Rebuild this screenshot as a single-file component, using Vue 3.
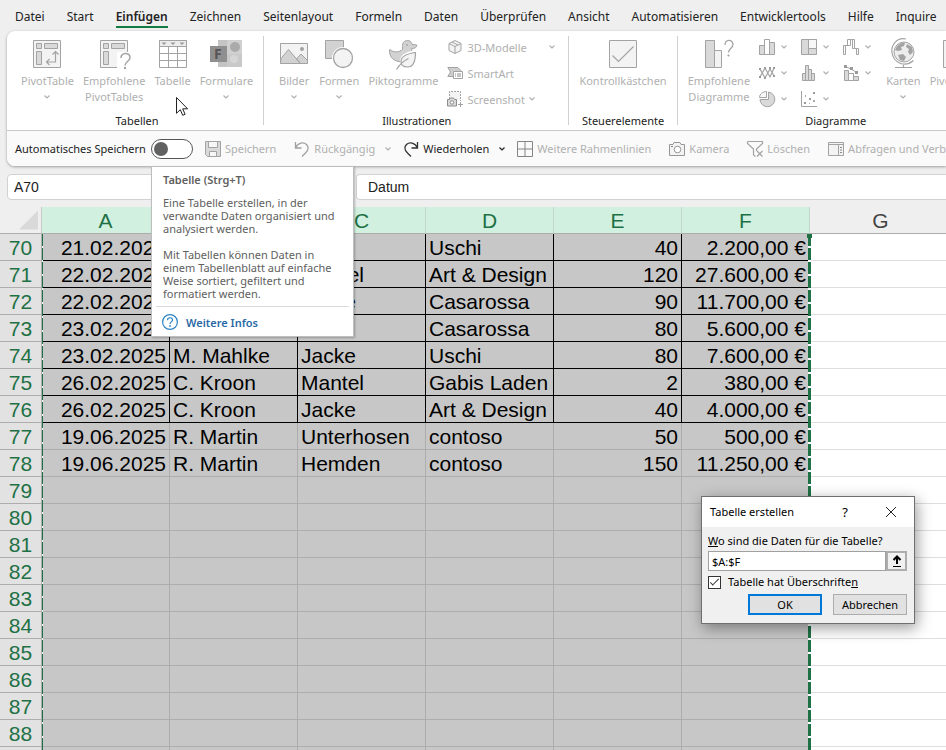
<template>
  <div class="excel">
    <nav class="tabs">
      <button
        v-for="tab in tabs"
        :key="tab"
        type="button"
        :class="['tab', { 'tab--active': tab === activeTab }]"
        @click="activeTab = tab"
      >
        {{ tab }}
      </button>
    </nav>

    <header class="ribbon">
      <div class="groups">
        <section class="group">
          <div class="group-body">
            <button v-for="b in tableButtons" :key="b.lines[0]" type="button" class="big-button">
              <svg class="icon-big" viewBox="-2 0 32 28" v-html="icons[b.icon]"></svg>
              <span v-for="line in b.lines" :key="line">{{ line }}</span>
              <svg v-if="b.menu" class="chevron" viewBox="0 0 6 4" v-html="icons.chevron"></svg>
            </button>
          </div>
          <div class="group-title">Tabellen</div>
        </section>

        <section class="group group--images">
          <div class="group-body">
            <button v-for="b in imageButtons" :key="b.lines[0]" type="button" class="big-button">
              <svg class="icon-big" viewBox="-2 0 32 28" v-html="icons[b.icon]"></svg>
              <span v-for="line in b.lines" :key="line">{{ line }}</span>
              <svg v-if="b.menu" class="chevron" viewBox="0 0 6 4" v-html="icons.chevron"></svg>
            </button>
            <div class="small-list">
              <button type="button" class="small-button">
                <svg class="icon" viewBox="0 0 16 16" v-html="icons.cube"></svg>
                <span class="grow">3D-Modelle</span>
                <svg class="chevron" viewBox="0 0 6 4" v-html="icons.chevron"></svg>
              </button>
              <button type="button" class="small-button">
                <svg class="icon" viewBox="0 0 16 16" v-html="icons.smartart"></svg>
                <span>SmartArt</span>
              </button>
              <button type="button" class="small-button">
                <svg class="icon" viewBox="0 0 16 16" v-html="icons.screenshot"></svg>
                <span>Screenshot</span>
                <svg class="chevron" viewBox="0 0 6 4" v-html="icons.chevron"></svg>
              </button>
            </div>
          </div>
          <div class="group-title">Illustrationen</div>
        </section>

        <section class="group">
          <div class="group-body">
            <button type="button" class="big-button">
              <svg class="icon-big" viewBox="-2 0 32 28" v-html="icons.checkbox"></svg>
              <span>Kontrollkästchen</span>
            </button>
          </div>
          <div class="group-title">Steuerelemente</div>
        </section>

        <section class="group">
          <div class="group-body">
            <button type="button" class="big-button">
              <svg class="icon-big" viewBox="-2 0 32 28" v-html="icons.recommended"></svg>
              <span>Empfohlene</span>
              <span>Diagramme</span>
            </button>
            <div class="chart-grid">
              <button v-for="c in charts" :key="c.icon" type="button" class="chart-button" :aria-label="c.label">
                <svg class="icon" viewBox="0 0 16 16" v-html="icons[c.icon]"></svg>
                <svg class="chevron" viewBox="0 0 6 4" v-html="icons.chevron"></svg>
              </button>
            </div>
            <button type="button" class="big-button">
              <svg class="icon-big" viewBox="-2 0 32 28" v-html="icons.globe"></svg>
              <span>Karten</span>
              <svg class="chevron" viewBox="0 0 6 4" v-html="icons.chevron"></svg>
            </button>
            <button type="button" class="big-button">
              <svg class="icon-big" viewBox="-2 0 32 28" v-html="icons.pivot"></svg>
              <span>PivotChart</span>
              <svg class="chevron" viewBox="0 0 6 4" v-html="icons.chevron"></svg>
            </button>
          </div>
          <div class="group-title">Diagramme</div>
        </section>
      </div>

      <div class="quick">
        <label class="autosave">
          Automatisches Speichern
          <input v-model="autosave" type="checkbox" role="switch" class="switch" />
        </label>
        <button
          v-for="q in quickButtons"
          :key="q.label"
          type="button"
          :class="['quick-button', { 'quick-button--on': q.enabled, 'quick-button--menu': q.menu }]"
        >
          <svg class="icon" viewBox="0 0 16 16" v-html="icons[q.icon]"></svg>
          <span>{{ q.label }}</span>
          <svg v-if="q.menu" class="chevron" viewBox="0 0 6 4" v-html="icons.chevron"></svg>
        </button>
      </div>
    </header>

    <div class="formula-bar">
      <input v-model="cellName" class="name-box" type="text" aria-label="Namenfeld" />
      <input v-model="formula" class="formula-box" type="text" aria-label="Bearbeitungsleiste" />
    </div>

    <main class="sheet">
      <table class="grid">
        <colgroup>
          <col class="col-head" />
          <col v-for="n in 6" :key="n" class="col-data" />
          <col />
        </colgroup>
        <thead>
          <tr>
            <th class="corner"><span class="corner-mark"></span></th>
            <th v-for="c in columns" :key="c" scope="col" :class="{ selected: c !== 'G' }">{{ c }}</th>
          </tr>
        </thead>
        <tbody>
          <tr v-for="row in rows" :key="row.nr" :class="{ framed: row.nr <= 76 }">
            <th scope="row">{{ row.nr }}</th>
            <td v-for="(cell, i) in row.cells" :key="i" :class="{ number: i === 0 || i > 3 }">{{ cell }}</td>
            <td class="outside"></td>
          </tr>
        </tbody>
      </table>
      <div class="ants"></div>
    </main>

    <!-- Tooltip zu "Tabelle" -->
    <aside class="tooltip">
      <strong>Tabelle (Strg+T)</strong>
      <p>Eine Tabelle erstellen, in der<br />verwandte Daten organisiert und<br />analysiert werden.</p>
      <p>Mit Tabellen können Daten in<br />einem Tabellenblatt auf einfache<br />Weise sortiert, gefiltert und<br />formatiert werden.</p>
      <a href="#" class="more">
        <svg class="icon" viewBox="0 0 16 16" v-html="icons.help"></svg>
        Weitere Infos
      </a>
    </aside>

    <svg class="pointer" viewBox="0 0 12 19">
      <path d="M.5.5v15.8l3.8-3.6 2.4 5.6 2.4-1-2.4-5.5h4.9z" fill="#fff" stroke="#222" />
    </svg>

    <form class="dialog" role="dialog" aria-label="Tabelle erstellen" @submit.prevent>
      <div class="dialog-bar">
        <span class="grow">Tabelle erstellen</span>
        <button type="button" class="bar-button help">?</button>
        <button type="button" class="bar-button" aria-label="Schließen">
          <svg class="close" viewBox="0 0 10 10"><path d="M0 0l10 10M10 0L0 10" stroke="#222" /></svg>
        </button>
      </div>
      <div class="dialog-body">
        <label for="range"><u>W</u>o sind die Daten für die Tabelle?</label>
        <div class="range">
          <input id="range" v-model="range" type="text" />
          <button type="button" aria-label="Bereich auswählen">
            <svg viewBox="0 0 10 12" class="range-arrow">
              <path d="M5 9V2M1.500 5L5 1.500 8.500 5" fill="none" stroke="#000" stroke-width="2" />
              <path d="M1 11.500h8" stroke="#000" />
            </svg>
          </button>
        </div>
        <label class="check">
          <input v-model="hasHeaders" type="checkbox" />
          <span>Tabelle hat Überschrifte<u>n</u></span>
        </label>
        <div class="actions">
          <button type="submit" class="primary">OK</button>
          <button type="button">Abbrechen</button>
        </div>
      </div>
    </form>
  </div>
</template>

<script setup>
import { ref } from 'vue'

const activeTab = ref('Einfügen')
const autosave = ref(false)
const cellName = ref('A70')
const formula = ref('Datum')
const range = ref('$A:$F')
const hasHeaders = ref(true)

const tabs = [
  'Datei', 'Start', 'Einfügen', 'Zeichnen', 'Seitenlayout', 'Formeln', 'Daten',
  'Überprüfen', 'Ansicht', 'Automatisieren', 'Entwicklertools', 'Hilfe', 'Inquire',
]

const tableButtons = [
  { icon: 'pivot', lines: ['PivotTable'], menu: true },
  { icon: 'pivotHelp', lines: ['Empfohlene', 'PivotTables'] },
  { icon: 'table', lines: ['Tabelle'] },
  { icon: 'forms', lines: ['Formulare'], menu: true },
]

const imageButtons = [
  { icon: 'picture', lines: ['Bilder'], menu: true },
  { icon: 'shapes', lines: ['Formen'], menu: true },
  { icon: 'duck', lines: ['Piktogramme'] },
]

const charts = [
  { icon: 'column', label: 'Säulendiagramm' },
  { icon: 'treemap', label: 'Hierarchiediagramm' },
  { icon: 'waterfall', label: 'Wasserfalldiagramm' },
  { icon: 'line', label: 'Liniendiagramm' },
  { icon: 'histogram', label: 'Statistikdiagramm' },
  { icon: 'combo', label: 'Kombidiagramm' },
  { icon: 'pie', label: 'Kreisdiagramm' },
  { icon: 'scatter', label: 'Punktdiagramm' },
]

const quickButtons = [
  { icon: 'save', label: 'Speichern' },
  { icon: 'undo', label: 'Rückgängig', menu: true },
  { icon: 'redo', label: 'Wiederholen', menu: true, enabled: true },
  { icon: 'borders', label: 'Weitere Rahmenlinien' },
  { icon: 'camera', label: 'Kamera' },
  { icon: 'filter', label: 'Löschen' },
  { icon: 'queries', label: 'Abfragen und Verbindungen' },
]

const columns = ['A', 'B', 'C', 'D', 'E', 'F', 'G']

const data = [
  ['21.02.2025', 'M. Mahlke', 'Hose', 'Uschi', '40', '2.200,00 €'],
  ['22.02.2025', 'C. Kroon', 'Mantel', 'Art & Design', '120', '27.600,00 €'],
  ['22.02.2025', 'C. Kroon', 'Jacke', 'Casarossa', '90', '11.700,00 €'],
  ['23.02.2025', 'C. Kroon', 'Hose', 'Casarossa', '80', '5.600,00 €'],
  ['23.02.2025', 'M. Mahlke', 'Jacke', 'Uschi', '80', '7.600,00 €'],
  ['26.02.2025', 'C. Kroon', 'Mantel', 'Gabis Laden', '2', '380,00 €'],
  ['26.02.2025', 'C. Kroon', 'Jacke', 'Art & Design', '40', '4.000,00 €'],
  ['19.06.2025', 'R. Martin', 'Unterhosen', 'contoso', '50', '500,00 €'],
  ['19.06.2025', 'R. Martin', 'Hemden', 'contoso', '150', '11.250,00 €'],
]

// Zeilen 70 bis 89, nach den Daten leer
const rows = Array.from({ length: 20 }, (_, i) => ({
  nr: 70 + i,
  cells: data[i] || ['', '', '', '', '', ''],
}))

const g = 'stroke="#a3a3a3"'
const pivotBase = `<path d="M.5.5h27v27H.5z" fill="#f3f3f3" ${g}/><path d="M3.500 3.500h5v5h-5zM11.500 3.500h13v5h-13zM3.500 11.500h5v13h-5z" fill="#d9d9d9" ${g}/>`

const icons = {
  chevron: '<path d="M.5.5L3 3 5.500.5" fill="none" stroke="currentColor" stroke-width="1.200"/>',
  pivot: `${pivotBase}<path d="M22.500 12v10h-9M19.500 14.500l3-3 3 3M16.500 19l-3 3 3 3" fill="none" ${g} stroke-width="1.200"/>`,
  pivotHelp: `<path d="M17 27.500H.5V.5h27V12" fill="#f3f3f3" ${g}/><path d="M3.500 3.500h5v5h-5zM11.500 3.500h13v5h-13zM3.500 11.500h5v13h-5z" fill="#d9d9d9" ${g}/><path d="M17 12h14v17H17z" fill="#fff"/><path d="M21 18c0-6 9-6 9-.5 0 4-5 4-5 8" fill="none" ${g} stroke-width="1.500"/><circle cx="25" cy="28" r="1.200" fill="#a3a3a3"/>`,
  table: `<path d="M.5.5h27v27H.5z" fill="#fff" ${g}/><path d="M.5.5h27v6H.5z" fill="#ececec" ${g}/><path d="M9.500 6v22M18.500 6v22M.5 13.500h27M.5 20.500h27" ${g}/><path d="M2.500 2.500h5L5 5zM11.500 2.500h5L14 5zM20.500 2.500h5L23 5z" fill="#9a9a9a"/>`,
  forms: '<path d="M6 0h24v27H6z" fill="#d0d0d0"/><path d="M6 0h9v27H6z" fill="#c4c4c4"/><path d="M15 14h15v13H15z" fill="#c9c9c9"/><circle cx="23" cy="7" r="5" fill="#aaa"/><circle cx="22" cy="19" r="4" fill="#d6d6d6"/><path d="M-2 6h17v16H-2z" fill="#8f8f8f"/><text x="2" y="19" font-family="Noto Sans" font-size="14" font-weight="700" fill="#555">F</text>',
  picture: `<path d="M.5 3.500h27v20H.5z" fill="#f3f3f3" ${g}/><path d="M1 18.500L8.500 9.500l12 14H.5zM16.500 19l4.500-5 6.500 6.500v3h-7z" fill="#d2d2d2" ${g}/><circle cx="22" cy="9" r="2" fill="#a3a3a3"/>`,
  shapes: `<path d="M.5.5h18v18H.5z" fill="#d2d2d2" ${g}/><circle cx="18" cy="18" r="11" fill="#fff"/><circle cx="18" cy="18" r="9.500" fill="#f3f3f3" ${g} stroke-width="1.300"/>`,
  duck: `<path d="M.7 9.500c4 3 8 3 11.500 1 2-1.200 1.300-3.500 1.300-5 .3-6.500 9-6.500 9.500-1l4.800.5c0 2.500-2 3.500-5 3.500-1 3.500 2 4 1 8-1 4-4 5.500-10 5.500C5 22-.5 17 .7 9.500z" fill="#d2d2d2" ${g}/><path d="M28 10c-7 1-17 3-17 11 0 5 4 7 8 7 7 0 9-7 9-18z" fill="#fff"/><path d="M26.500 12.500c-7 1-14.500 3-14.500 9 0 4 3 5.500 6.500 5.500 6.500 0 8-6 8-14.500zM7.500 29.500c3-5 7-8.500 12-11" fill="#f3f3f3" ${g} stroke-width="1.200"/><circle cx="18" cy="5" r=".8" fill="#888"/>`,
  cube: `<path d="M8 1.500l6 3v7L8 14.500l-6-3v-7z" fill="#f3f3f3" ${g}/><path d="M2 4.500l6 3 6-3M8 7.500v7M5 3l6 3" fill="none" ${g}/>`,
  smartart: `<path d="M.8 2.500h10l3 3-1 1.500H6.500v4.500H.8L3.500 7z" fill="#cfcfcf" ${g}/><path d="M6.500 6.500h9v7h-9z" fill="#fff" ${g}/><path d="M8 9h1m1 0h4M8 11h1m1 0h4" stroke="#8d8d8d"/>`,
  screenshot: `<path d="M2.500 8V.5h11V10" fill="#f3f3f3" ${g} stroke-dasharray="2 1"/><path d="M.5 8.500h2l1-1.500h3l1 1.500h2v6.500h-9z" fill="#d9d9d9" stroke="#8d8d8d"/><circle cx="5" cy="11.500" r="1.700" fill="#fff" stroke="#8d8d8d"/><path d="M11 13.500h5M13.500 11v5" ${g}/>`,
  checkbox: `<path d="M.5.5h27v27H.5z" fill="#f3f3f3" ${g}/><path d="M3.500 15.500l6 6 15-15" fill="none" ${g} stroke-width="1.200"/>`,
  recommended: `<path d="M.5.5h9v27h-9z" fill="#d9d9d9" ${g}/><path d="M9.500 10.500h7v17h-7z" fill="#f3f3f3" ${g}/><path d="M20 5c0-6 8-6 8-.5 0 3.500-4.500 4-4.500 8" fill="none" ${g} stroke-width="1.300"/><circle cx="23.500" cy="15.500" r="1.100" fill="#a3a3a3"/>`,
  globe: `<circle cx="15" cy="12" r="10" fill="#ededed" ${g}/><path d="M8 6c3-3 6-4 8-3l-1 3-3 1 1 3-4 1-3-1zM18 4l5 3 1 5-3 3-2-3 1-3-3-2zM9 15l5-1 3 3-2 4-4-1z" fill="#a3a3a3"/><path d="M17-1C8-3 2 5 3 12.500 4.500 23 16 28 24.500 20.500M14.500 25v3M6 27.500h17" fill="none" ${g} stroke-width="1.200"/>`,
  column: `<path d="M.5 6.500h5v9h-5z" fill="#d9d9d9" ${g}/><path d="M5.500.5h5v15h-5z" fill="#fff" ${g}/><path d="M10.500 3.500h5v12h-5z" fill="#d9d9d9" ${g}/>`,
  treemap: `<path d="M.5.5h15v15H.5z" fill="#d9d9d9" ${g}/><path d="M7.500.5h8v9h-8z" fill="#f7f7f7" ${g}/><path d="M7.500 9.500v6" ${g}/>`,
  waterfall: `<path d="M.5 15.500v-9h2v9zM2.500 6.500H5M4.500.5h3v6h-3zM9.500.5h2v9h-2zM7.500.5h2M13.500 9.500h2v6h-2zM11.500 9.500h2" fill="#fff" ${g}/>`,
  line: `<path d="M1 12l5-9 5 9 4-9M1 4l5 9 5-9 4 7" fill="none" ${g} stroke-width="1.200"/><path d="M0 11h2v2H0zM5 2h2v2H5zM10 2h2v2h-2zM14 2h2v2h-2zM0 3h2v2H0zM5 12h2v2H5zM14 10h2v2h-2z" fill="#999"/>`,
  histogram: `<path d="M1.500 8.500h3v7h-3zM4.500.5h3v15h-3zM7.500 4.500h3v11h-3zM10.500 8.500h3v7h-3z" fill="#d9d9d9" ${g}/>`,
  combo: `<path d="M1.500 5.500h4v10h-4zM10.500 11.500h5v4h-5z" fill="#d9d9d9" ${g}/><path d="M5.500 8.500h5v7h-5z" fill="#fff" ${g}/><path d="M2 1.500l6 2.500 6 3.500" fill="none" ${g}/><path d="M1 0h3v3H1zM7 2h3v3H7zM12 6h3v3h-3z" fill="#999"/>`,
  pie: `<path d="M9.500 1v7.500h-8.500A7.400 7.400 0 1 0 9.500 1z" fill="#d9d9d9" ${g}/><path d="M7.500.5v6h-7c0-3.500 3.500-6 7-6z" fill="#f7f7f7" ${g}/>`,
  scatter: `<path d="M.5 0v15.500H16" fill="none" ${g}/><path d="M12 1h2v2h-2zM3 11h2v2H3zM8 7h2v2H8z" fill="#999"/><path d="M4 4h1v2H4zM12 9h2v2h-2zM8 12h1v1H8z" fill="#aaa"/>`,
  save: `<path d="M.5.5h15v15h-13l-2-2z" fill="#d9d9d9" ${g}/><path d="M3.500.5h9v6h-9zM4.500 10.500h7v5h-7z" fill="#f7f7f7" ${g}/>`,
  undo: '<path d="M1.500 1v6h6M1.500 7C4 1.500 9.500.5 12.500 3.500c3.500 3.500 1 6.500-1 8.500L8 15.500" fill="none" stroke="#a0a0a0" stroke-width="1.300"/>',
  redo: '<path d="M14.500 1v6h-6M14.500 7C12 1.500 6.500.5 3.500 3.500c-3.500 3.500-1 6.500 1 8.500L8 15.500" fill="none" stroke="#333" stroke-width="1.300"/>',
  borders: '<path d="M.5.5h15v15H.5zM8 .5v15M.5 8h15" fill="none" stroke="#858585"/>',
  camera: '<path d="M.5 3.500H4l1-2h6l1 2h3.500v11H.5z" fill="#f3f3f3" stroke="#979797"/><circle cx="8.500" cy="8.500" r="3.300" fill="#fff" stroke="#979797"/><path d="M2 5h2v1H2z" fill="#888"/>',
  filter: `<path d="M.5.5h15v2L9.500 8v2M.5.5v2L6.500 8v6l2 1.500" fill="none" ${g} stroke-width="1.200"/><path d="M10 10l5.500 5.500m0-5.500L10 15.500" ${g} stroke-width="1.200"/>`,
  queries: `<path d="M.5 1.500h15v13H.5z" fill="#f3f3f3" ${g}/><path d="M.5 3.500h15M10.500 3.500v11" ${g}/><path d="M12 6.500h2M12 9h2M12 11.500h2" stroke="#888"/>`,
  help: '<circle cx="8" cy="8" r="7.400" fill="#fff" stroke="#2e84c4" stroke-width="1.200"/><path d="M5.500 6.300c0-3.400 5-3.300 5-.3 0 1.800-2.500 2-2.500 4" fill="none" stroke="#2e84c4" stroke-width="1.200"/><circle cx="8" cy="12" r=".9" fill="#2e84c4"/>',
}
</script>

<style>
body {
  margin: 0;
}
</style>

<style scoped>
.excel {
  position: relative;
  height: 100vh;
  overflow: hidden;
  background: #efefef;
  color: #222;
  font-family: 'Noto Sans', 'Open Sans', sans-serif;
  font-size: 12px;
}
button {
  padding: 0;
  border: 0;
  background: none;
  color: inherit;
  font: inherit;
  white-space: nowrap;
}
input {
  box-sizing: border-box;
  margin: 0;
  font: inherit;
  outline: none;
}
svg {
  display: block;
  flex: none;
  overflow: visible;
}
.grow {
  flex: 1;
  text-align: left;
}
.icon {
  width: 16px;
  height: 16px;
}
.chevron {
  width: 6px;
  height: 4px;
}

/* Registerkarten */
.tabs {
  display: flex;
  gap: 22px;
  height: 31px;
  padding: 0 15px;
}
.tab {
  position: relative;
  line-height: 33px;
}
.tab--active {
  font-weight: 600;
}
.tab--active::after {
  content: '';
  position: absolute;
  right: 0;
  bottom: 3px;
  left: 0;
  height: 2px;
  background: #107c41;
}

/* Menüband */
.ribbon {
  margin-left: 7px;
  overflow: hidden;
  border-radius: 8px 0 0 8px;
  background: #fff;
  font-size: 11px;
  box-shadow: 0 1px 3px rgba(0, 0, 0, 0.35);
}
.groups {
  display: flex;
  height: 99px;
  border-bottom: 1px solid #c8c8c8;
}
.group {
  position: relative;
  flex: none;
  padding: 0 11px 0 10px;
}
.group:first-child {
  padding-left: 14px;
}
.group--images {
  padding: 0 14px;
}
.group:not(:last-child)::after {
  content: '';
  position: absolute;
  top: 5px;
  right: 0;
  bottom: 5px;
  width: 1px;
  background: #d0d0d0;
}
.group-body {
  display: flex;
  gap: 9px;
  height: 82px;
  color: #b0b0b0;
}
.group-title {
  line-height: 16px;
  text-align: center;
}
.big-button {
  display: flex;
  flex-direction: column;
  align-items: center;
  padding-top: 9px;
  line-height: 16px;
}
.icon-big {
  width: 32px;
  height: 28px;
  margin-bottom: 5px;
}
.big-button .chevron {
  margin-top: 6px;
}
.small-list {
  padding-top: 3px;
}
.small-button {
  display: flex;
  align-items: center;
  gap: 4px;
  width: 108px;
  height: 26px;
}
.chart-grid {
  display: grid;
  grid-template-columns: 42px 42px 34px;
  grid-auto-rows: 26px;
  padding-top: 3px;
}
.chart-button {
  display: flex;
  align-items: center;
  gap: 6px;
}

/* Schnellzugriff */
.quick {
  display: flex;
  align-items: center;
  gap: 18px;
  height: 35px;
  padding-left: 8px;
  background: #fafafa;
}
.autosave {
  display: flex;
  align-items: center;
  gap: 5px;
  margin-right: -6px;
  white-space: nowrap;
}
.switch {
  display: flex;
  align-items: center;
  width: 42px;
  height: 20px;
  padding: 0 2px;
  border: 1px solid #555;
  border-radius: 10px;
  background: #fff;
  appearance: none;
}
.switch::before {
  content: '';
  width: 14px;
  height: 14px;
  border-radius: 50%;
  background: #616161;
}
.switch:checked {
  justify-content: flex-end;
}
.quick-button {
  display: flex;
  align-items: center;
  gap: 4px;
  color: #b0b0b0;
}
.quick-button--menu {
  margin-right: -6px;
}
.quick-button .chevron {
  margin-left: 6px;
}
.quick-button--on {
  color: #222;
}

/* Bearbeitungsleiste */
.formula-bar {
  display: flex;
  gap: 9px;
  padding: 8px 0 7px 7px;
}
.name-box,
.formula-box {
  height: 26px;
  border: 1px solid #d2d2d2;
  border-radius: 4px;
  background: #fff;
  color: #222;
  font-family: 'Liberation Sans', Arial, sans-serif;
  font-size: 14px;
}
.name-box {
  width: 340px;
  padding: 0 6px;
}
.formula-box {
  flex: 1;
  padding: 0 11px;
  border-right: 0;
  border-radius: 4px 0 0 4px;
}

/* Tabellenblatt */
.sheet {
  position: relative;
}
.grid {
  width: 100%;
  min-width: 952px;
  border-spacing: 0;
  table-layout: fixed;
  font-family: 'Liberation Sans', Arial, sans-serif;
  font-size: 21px;
  line-height: 24px;
  white-space: nowrap;
}
.col-head {
  width: 42px;
}
.col-data {
  width: 128px;
}
.grid th,
.grid td {
  box-sizing: border-box;
  height: 27px;
  padding: 2px 3px 0;
  overflow: hidden;
  border: solid #adadad;
  border-width: 0 1px 1px 0;
}
.grid th {
  color: #1e7145;
  font-weight: 400;
}
.grid thead th {
  border-right-color: #c4d6cc;
  color: #444;
}
.grid thead th.selected {
  background: #d2f0e0;
  color: #1e7145;
}
.grid thead .corner {
  padding: 3px;
  border-right-color: #c8c8c8;
}
.corner-mark {
  display: block;
  width: 19px;
  height: 19px;
  margin-left: auto;
  background: #d9d9d9;
  clip-path: polygon(100% 0, 100% 100%, 0 100%);
}
.grid tbody th {
  background: #e2e2e2;
}
.grid td {
  background: #c7c7c7;
  color: #000;
}
.grid td.number {
  text-align: right;
}
.framed td {
  border-color: #000;
}
.grid td.outside {
  border-color: #dedede;
  background: #fff;
}
/* Laufrahmen um A:F */
.ants {
  position: absolute;
  top: 27px;
  bottom: 0;
  left: 42px;
  width: 769px;
  background:
    repeating-linear-gradient(#1e7145 0 12px, #fff 12px 14px) left / 1px 100% no-repeat,
    repeating-linear-gradient(#1e7145 0 12px, #fff 12px 14px) right / 3px 100% no-repeat;
}
.ants::after {
  content: '';
  position: absolute;
  top: 0;
  right: -1px;
  width: 5px;
  height: 4px;
  background: #1e7145;
}

/* Tooltip */
.tooltip {
  position: absolute;
  top: 166px;
  left: 151px;
  box-sizing: border-box;
  width: 203px;
  padding: 6px 4px;
  border: 1px solid #bebebe;
  background: #fff;
  color: #606060;
  font-size: 11px;
  line-height: 13px;
  white-space: nowrap;
  box-shadow: 1px 1px 2px rgba(0, 0, 0, 0.25);
}
.tooltip strong,
.tooltip p {
  display: block;
  margin: 0 7px 13px;
}
.tooltip strong {
  margin-bottom: 10px;
  font-weight: 600;
}
.tooltip p:last-of-type {
  margin-bottom: 6px;
}
.more {
  display: flex;
  align-items: center;
  gap: 8px;
  padding: 7px 6px 0;
  border-top: 1px solid #dcdcdc;
  color: #2a69a6;
  font-weight: 600;
  text-decoration: none;
}
.pointer {
  position: absolute;
  top: 97px;
  left: 176px;
  width: 12px;
  height: 19px;
}

/* Dialog */
.dialog {
  position: absolute;
  top: 496px;
  left: 701px;
  box-sizing: border-box;
  width: 214px;
  border: 1px solid #6f6f6f;
  background: #f0f0f0;
  color: #000;
  font-size: 11px;
  line-height: 16px;
  box-shadow: 2px 4px 14px rgba(0, 0, 0, 0.4);
}
.dialog-bar {
  display: flex;
  align-items: center;
  height: 30px;
  padding-left: 8px;
  background: #fff;
}
.bar-button {
  display: flex;
  align-items: center;
  justify-content: center;
  width: 46px;
  height: 30px;
}
.help {
  font-size: 13px;
}
.close {
  width: 10px;
  height: 10px;
}
.dialog-body {
  padding: 6px 7px 8px 6px;
}
.range {
  display: flex;
  margin: 2px 0 3px;
}
.range input {
  flex: 1;
  min-width: 0;
  height: 20px;
  padding: 0 3px;
  border: 1px solid #a0a0a0;
  background: #fff;
}
.range button {
  display: flex;
  align-items: center;
  justify-content: center;
  width: 21px;
  height: 20px;
  border: 2px solid #adadad;
  background: #f0f0f0;
}
.range-arrow {
  width: 10px;
  height: 12px;
}
.check {
  display: flex;
  align-items: center;
  gap: 7px;
}
.check input {
  display: grid;
  place-items: center;
  width: 13px;
  height: 13px;
  border: 1px solid #333;
  background: #fff;
  appearance: none;
}
.check input:checked::before {
  content: '';
  width: 8px;
  height: 3px;
  margin-bottom: 3px;
  border: solid #333;
  border-width: 0 0 1px 1px;
  transform: rotate(-45deg);
}
.actions {
  display: flex;
  justify-content: flex-end;
  gap: 11px;
  margin-top: 4px;
}
.actions button {
  box-sizing: border-box;
  width: 74px;
  height: 21px;
  border: 1px solid #adadad;
  background: #e1e1e1;
}
.actions .primary {
  border: 2px solid #0078d7;
}
</style>
